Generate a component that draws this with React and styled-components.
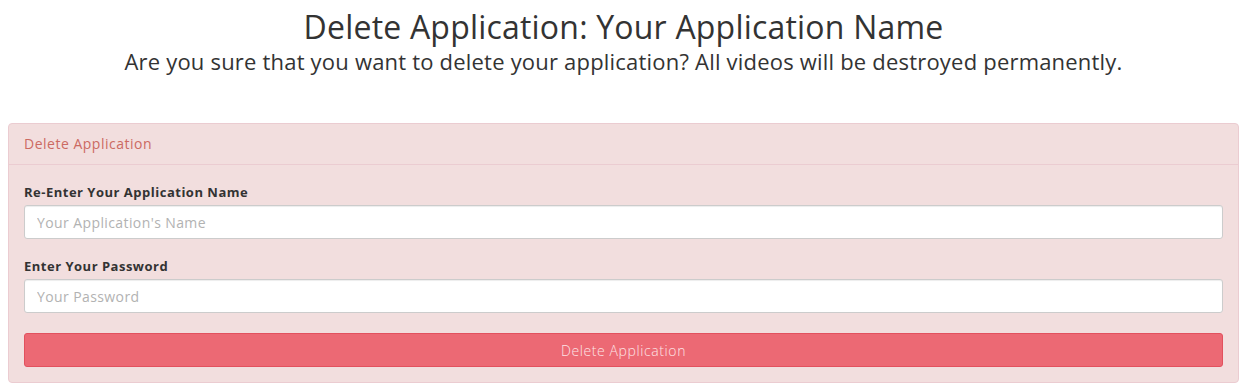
import React, { useState } from 'react';
import styled, { createGlobalStyle } from 'styled-components';

const GlobalStyle = createGlobalStyle`
  body {
    margin: 8px;
    background: #ffffff;
    font-family: "Open Sans", "Liberation Sans", sans-serif;
    color: #333333;
  }
  * { box-sizing: border-box; }
`;

const Heading = styled.div`
  text-align: center;
  padding-top: 2px;
  margin-bottom: 45px;
`;

const Title = styled.h1`
  margin: 0;
  font-size: 32px;
  font-weight: 400;
  line-height: 34px;
  letter-spacing: 0.2px;
  color: #333333;
`;

const Subtitle = styled.h2`
  margin: 0;
  font-size: 22px;
  font-weight: 400;
  line-height: 34px;
  letter-spacing: 0.2px;
  color: #333333;
`;

const Panel = styled.div`
  background: #f2dede;
  border: 1px solid #ebccd1;
  border-radius: 4px;
`;

const PanelHeading = styled.div`
  padding: 10px 15px;
  line-height: 20px;
  font-size: 14px;
  letter-spacing: 0.5px;
  color: #cc6a62;
  border-bottom: 1px solid #ebccd1;
`;

const PanelBody = styled.form`
  padding: 15px;
`;

const FormGroup = styled.div`
  margin-bottom: ${(p) => (p.$last ? '20px' : '15px')};
`;

const Label = styled.label`
  display: block;
  font-size: 13px;
  font-weight: 700;
  line-height: 20px;
  padding-top: 2px;
  margin-bottom: 3px;
  color: #333333;
  letter-spacing: 0.5px;
`;

const Input = styled.input`
  display: block;
  width: 100%;
  height: 34px;
  padding: 6px 12px;
  font-family: inherit;
  font-size: 14px;
  letter-spacing: 0.4px;
  background: #ffffff;
  border: 1px solid #cccccc;
  border-radius: 3px;
  box-shadow: inset 0 1px 1px rgba(0, 0, 0, 0.075);
  color: #555555;

  &::placeholder {
    color: #b2b2b2;
  }

  &:focus {
    outline: none;
    border-color: #66afe9;
  }
`;

const Button = styled.button`
  display: block;
  width: 100%;
  height: 34px;
  font-family: inherit;
  font-size: 14px;
  font-weight: 300;
  letter-spacing: 0.6px;
  color: #fde4e6;
  background: #ec6974;
  border: 1px solid #e2515e;
  border-radius: 3px;
  cursor: pointer;
`;

const App = () => {
  const [name, setName] = useState('');
  const [password, setPassword] = useState('');

  const handleSubmit = (e) => {
    e.preventDefault();
  };

  return (
    <>
      <GlobalStyle />
      <Heading>
        <Title>Delete Application: Your Application Name</Title>
        <Subtitle>Are you sure that you want to delete your application? All videos will be destroyed permanently.</Subtitle>
      </Heading>
      <Panel>
        <PanelHeading>Delete Application</PanelHeading>
        <PanelBody onSubmit={handleSubmit}>
          <FormGroup>
            <Label>Re-Enter Your Application Name</Label>
            <Input
              type="text"
              placeholder="Your Application's Name"
              value={name}
              onChange={(e) => setName(e.target.value)}
            />
          </FormGroup>
          <FormGroup $last>
            <Label>Enter Your Password</Label>
            <Input
              type="password"
              placeholder="Your Password"
              value={password}
              onChange={(e) => setPassword(e.target.value)}
            />
          </FormGroup>
          <Button type="submit">Delete Application</Button>
        </PanelBody>
      </Panel>
    </>
  );
};

export default App;
